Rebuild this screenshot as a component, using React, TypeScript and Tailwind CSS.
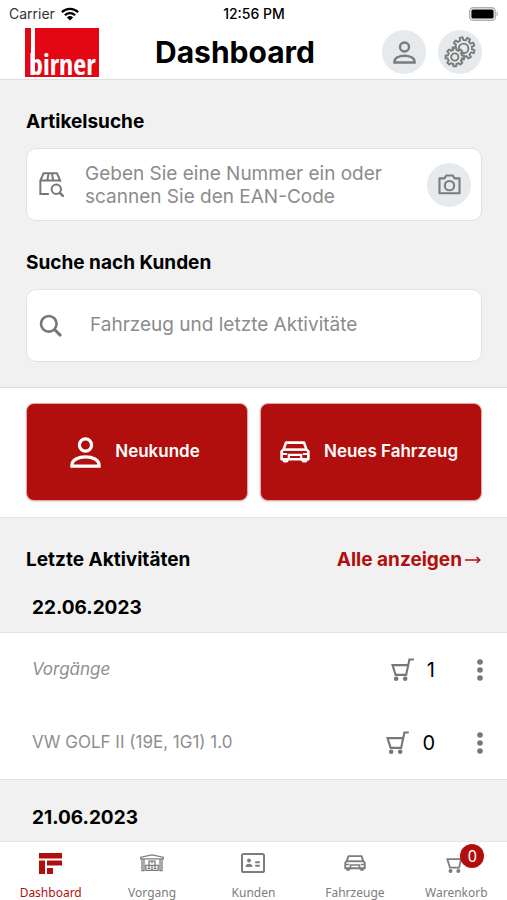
import React from "react";

type IconProps = { className?: string };

function gearPath(cx: number, cy: number, outer: number, inner: number, teeth: number, turn: number) {
  const step = (Math.PI * 2) / teeth;
  const at = (r: number, a: number) =>
    `${(cx + r * Math.cos(a)).toFixed(2)} ${(cy + r * Math.sin(a)).toFixed(2)}`;
  let d = "";
  for (let i = 0; i < teeth; i++) {
    const a = i * step + turn;
    d += `${i === 0 ? "M" : "L"}${at(inner, a - step * 0.28)}`;
    d += `L${at(outer, a - step * 0.2)}L${at(outer, a + step * 0.2)}L${at(inner, a + step * 0.28)}`;
    d += `A${inner} ${inner} 0 0 1 ${at(inner, a + step * 0.72)}`;
  }
  return d + "Z";
}

function PersonIcon({ className }: IconProps) {
  return (
    <svg viewBox="0 0 24 24" className={className} fill="none" stroke="currentColor" strokeWidth="2.5" aria-hidden="true">
      <circle cx="12" cy="6.2" r="4.7" />
      <path d="M1.5 22.5v-.9c0-4 5-6.2 10.5-6.2s10.5 2.2 10.5 6.2v.9z" />
    </svg>
  );
}

function GearsIcon({ className }: IconProps) {
  return (
    <svg viewBox="0 0 32 32" className={className} stroke="currentColor" strokeWidth="1.9" strokeLinejoin="round" fill="none" aria-hidden="true">
      <path d={gearPath(19.6, 12.4, 11.2, 8.4, 9, 0.3)} />
      <circle cx="19.6" cy="12.4" r="4.8" />
      <path d={gearPath(10.8, 21, 9.4, 7.2, 8, 0)} fill="#e7eaec" />
      <circle cx="10.8" cy="21" r="3.6" />
    </svg>
  );
}

function PackageSearchIcon({ className }: IconProps) {
  return (
    <svg viewBox="0 0 24 24" className={className} fill="none" stroke="currentColor" strokeWidth="1.9" aria-hidden="true">
      <path d="M9.5 21.1H1.3V8.2L4.4 1.3h12.8l3.1 6.9v1.2M1.3 8.2h19M9.2 1.3L8 8.2M12.4 1.3l1.2 6.9" />
      <circle cx="16.6" cy="16.6" r="4.5" />
      <path d="M19.8 19.8l4 4" strokeWidth="2.4" />
    </svg>
  );
}

function CameraIcon({ className }: IconProps) {
  return (
    <svg viewBox="0 0 24 22" className={className} fill="none" stroke="currentColor" strokeWidth="2.2" strokeLinejoin="round" aria-hidden="true">
      <path d="M1.5 4.6h5.2L8.6 1.5h6.8l1.9 3.1h5.2v15.6h-21z" />
      <circle cx="12" cy="12.2" r="4.9" />
    </svg>
  );
}

function SearchIcon({ className }: IconProps) {
  return (
    <svg viewBox="0 0 24 24" className={className} fill="none" stroke="currentColor" strokeWidth="2.6" aria-hidden="true">
      <circle cx="9.8" cy="9.8" r="7.8" />
      <path d="M15.4 15.4l6.6 6.6" strokeWidth="3" />
    </svg>
  );
}

function CarIcon({ className }: IconProps) {
  return (
    <svg viewBox="0 0 30 22" className={className} fill="none" stroke="currentColor" strokeWidth="2.6" strokeLinejoin="round" aria-hidden="true">
      <path d="M1.6 10.4L3.6 8.4 6 1.6h18l2.4 6.8 2 2v7.8H1.6z" />
      <path d="M3.6 8.6h22.8" />
      <path d="M2 13h5.2M28 13h-5.2M8.8 18.2v-4.4h12.4v4.4" strokeWidth="2.2" />
      <path d="M3.2 18.4h4.6v1.2a1.2 1.2 0 0 1-1.2 1.2H4.4a1.2 1.2 0 0 1-1.2-1.2zM22.2 18.4h4.6v1.2a1.2 1.2 0 0 1-1.2 1.2h-2.2a1.2 1.2 0 0 1-1.2-1.2z" fill="currentColor" strokeWidth="1.4" />
    </svg>
  );
}

function CartIcon({ className }: IconProps) {
  return (
    <svg viewBox="0 0 24 24" className={className} fill="none" stroke="currentColor" strokeWidth="2.2" aria-hidden="true">
      <path d="M23.8 1.6h-4.6L15.8 17.6H4.8L1.6 7.4h16.2" />
      <circle cx="5.4" cy="21.6" r="2.4" fill="currentColor" stroke="none" />
      <circle cx="14.8" cy="21.6" r="2.4" fill="currentColor" stroke="none" />
    </svg>
  );
}

function DashboardIcon({ className }: IconProps) {
  return (
    <svg viewBox="0 0 23 21" className={className} fill="currentColor" aria-hidden="true">
      <path d="M0 0h23v5.6H0zM0 7.6h6V21H0zM8 7.6h15v5H8zM8 15h6v6H8z" />
    </svg>
  );
}

function GarageIcon({ className }: IconProps) {
  return (
    <svg viewBox="0 0 24 18" className={className} fill="none" stroke="currentColor" strokeWidth="1.3" aria-hidden="true">
      <path d="M.7 4.8V3.2L12 .8l11.3 2.4v1.6zM2 4.8V17M4 4.8V17M20 4.8V17M22 4.8V17M1.4 16.6h3M19.6 16.6h3" />
      <path d="M9 7.2h6v4.2H9zM5.8 11.4h6.2v5H5.8zM12 11.4h6.2v5H12zM12 7.2v2M9 11.4v2M15 11.4v2M7.4 14.4h3M13.6 14.4h3" />
    </svg>
  );
}

function ContactIcon({ className }: IconProps) {
  return (
    <svg viewBox="0 0 24 20" className={className} fill="none" stroke="currentColor" strokeWidth="2" aria-hidden="true">
      <rect x="1" y="1" width="22" height="18" rx="1.6" />
      <circle cx="8" cy="7.6" r="2" fill="currentColor" stroke="none" />
      <path d="M4.6 14c0-2.2 1.6-3.2 3.4-3.2s3.4 1 3.4 3.2z" fill="currentColor" stroke="none" />
      <path d="M14.2 9.2h4.6M14.2 12.8h4.6" />
    </svg>
  );
}

function DotsIcon({ className }: IconProps) {
  return (
    <svg viewBox="0 0 6 22" className={className} fill="currentColor" aria-hidden="true">
      <circle cx="3" cy="3" r="2.8" />
      <circle cx="3" cy="11" r="2.8" />
      <circle cx="3" cy="19" r="2.8" />
    </svg>
  );
}

function WifiIcon({ className }: IconProps) {
  return (
    <svg viewBox="0 0 18 14" className={className} fill="none" stroke="currentColor" strokeWidth="2.3" aria-hidden="true">
      <path d="M.9 5.1a11.6 11.6 0 0 1 16.2 0M3.9 8.2a7.3 7.3 0 0 1 10.2 0" />
      <path d="M9 13.6L5.9 10.4a4.5 4.5 0 0 1 6.2 0z" fill="currentColor" stroke="none" />
    </svg>
  );
}

function BatteryIcon({ className }: IconProps) {
  return (
    <svg viewBox="0 0 30 14" className={className} aria-hidden="true">
      <rect x=".7" y=".7" width="25.6" height="12.6" rx="3.6" fill="none" stroke="#b0b0b0" strokeWidth="1.4" />
      <rect x="2.4" y="2.4" width="22.2" height="9.2" rx="1.6" fill="#000" />
      <path d="M27.6 4.6c1.6.4 1.6 4.4 0 4.8z" fill="#a8a8a8" />
    </svg>
  );
}

function Logo() {
  return (
    <svg viewBox="0 0 74 49" className="h-[49px] w-[74px] overflow-visible" role="img" aria-label="birner">
      <rect width="74" height="49" fill="#e30613" />
      <rect x="6" width="4" height="47" fill="#fff" />
      <text x="4" y="47" fontSize="28" fontWeight="700" fill="#fff" fontFamily="'Liberation Sans Narrow', 'Open Sans Condensed', 'Roboto Condensed', 'Liberation Sans', sans-serif">
        birner
      </text>
    </svg>
  );
}

const activities = [
  { name: "Vorgänge", count: 1, italic: true },
  { name: "VW GOLF II (19E, 1G1) 1.0", count: 0, italic: false },
];

const tabs = [
  { label: "Dashboard", icon: <DashboardIcon className="h-[21px] w-[23px]" />, active: true },
  { label: "Vorgang", icon: <GarageIcon className="h-[18px] w-6" /> },
  { label: "Kunden", icon: <ContactIcon className="h-5 w-6" /> },
  { label: "Fahrzeuge", icon: <CarIcon className="h-4 w-[22px]" /> },
  { label: "Warenkorb", icon: <CartIcon className="h-5 w-5" />, badge: 0 },
];

const roundButton = "flex size-11 shrink-0 items-center justify-center rounded-full bg-[#e7eaec] text-[#7b7b7b]";
const card = "flex h-[73px] items-center rounded-[10px] border border-[#e2e2e2] bg-white text-[#777]";
const heading = "text-[19px] leading-7 font-bold";
const action =
  "flex h-[98px] flex-1 items-center justify-center gap-[14px] rounded-lg border border-[#e3a9a7] bg-[#b10f0d] pr-1 text-[17px] font-semibold text-white shadow-sm";

export default function App() {
  return (
    <div className="flex min-h-screen flex-col bg-[#f1f1f1] font-['Inter','Liberation_Sans',sans-serif] text-black">
      <header className="border-b border-[#dedede] bg-white">
        <div className="grid h-7 grid-cols-3 items-center pr-2 pl-[9px] text-sm">
          <div className="flex items-center gap-[6px] text-[#333]">
            Carrier
            <WifiIcon className="h-[14px] w-[18px] text-black" />
          </div>
          <div className="text-center font-medium">12:56 PM</div>
          <BatteryIcon className="h-[14px] w-[30px] justify-self-end" />
        </div>
        <div className="flex h-[51px] items-start px-[25px]">
          <Logo />
          <h1 className="ml-14 text-[30px] leading-[48px] font-bold">Dashboard</h1>
          <div className="ml-auto flex items-center gap-3 pt-[2px]">
            <button type="button" aria-label="Profil" className={roundButton}>
              <PersonIcon className="h-[23px] w-[23px]" />
            </button>
            <button type="button" aria-label="Einstellungen" className={roundButton}>
              <GearsIcon className="h-8 w-8" />
            </button>
          </div>
        </div>
      </header>

      <main className="flex-1">
        <section className="border-b border-[#dedede] pt-7 pr-[25px] pb-[25px] pl-[26px]">
          <label htmlFor="artikel" className={`block ${heading}`}>
            Artikelsuche
          </label>
          <div className={`${card} mt-3 pr-[10px] pl-3`}>
            <PackageSearchIcon className="h-[25px] w-[25px]" />
            <textarea
              id="artikel"
              rows={2}
              placeholder="Geben Sie eine Nummer ein oder scannen Sie den EAN-Code"
              className="ml-[21px] block min-w-0 flex-1 resize-none overflow-hidden text-[19px] leading-[23px] text-black outline-none placeholder:text-[#8c8c8c]"
            />
            <button type="button" aria-label="EAN-Code scannen" className={roundButton}>
              <CameraIcon className="h-[21px] w-[23px]" />
            </button>
          </div>
          <label htmlFor="kunden" className={`mt-7 block ${heading}`}>
            Suche nach Kunden
          </label>
          <div className={`${card} mt-3 pr-[10px] pl-3`}>
            <SearchIcon className="h-6 w-6" />
            <input
              id="kunden"
              type="text"
              placeholder="Fahrzeug und letzte Aktivitäte"
              className="ml-[27px] min-w-0 flex-1 text-[19px] text-black outline-none placeholder:text-[#8c8c8c]"
            />
          </div>
        </section>

        <section className="flex gap-3 border-b border-[#e4e4e4] bg-white pt-[15px] pr-[25px] pb-4 pl-[26px]">
          <button type="button" className={action}>
            <PersonIcon className="h-[31px] w-[31px]" />
            Neukunde
          </button>
          <button type="button" className={action}>
            <CarIcon className="h-[22px] w-[30px]" />
            Neues Fahrzeug
          </button>
        </section>

        <section>
          <div className={`flex items-center justify-between px-[26px] pt-7 ${heading}`}>
            <h2>Letzte Aktivitäten</h2>
            <a href="#alle" className="flex items-center gap-[3px] text-[#b10f0d]">
              Alle anzeigen
              <svg viewBox="0 0 16 10" className="h-[10px] w-4" fill="none" stroke="currentColor" strokeWidth="1.5" aria-hidden="true">
                <path d="M0 5h14.6M11.6 2L14.8 5l-3.2 3" />
              </svg>
            </a>
          </div>
          <h3 className={`mt-5 px-8 ${heading}`}>22.06.2023</h3>
          <ul className="mt-[10px] border-y border-[#e2e2e2] bg-white">
            {activities.map((a) => (
              <li key={a.name} className="flex h-[73px] items-center pr-6 pl-8">
                <span className={`flex-1 text-[17px] text-[#8e8e8e] ${a.italic ? "italic" : ""}`}>{a.name}</span>
                <CartIcon className="h-[23px] w-[23px] text-[#777]" />
                <span className="ml-[13px] text-xl leading-6">{a.count}</span>
                <button type="button" aria-label="Mehr" className="ml-[42px] text-[#777]">
                  <DotsIcon className="h-[22px] w-[6px]" />
                </button>
              </li>
            ))}
          </ul>
          <h3 className={`px-8 pt-6 pb-[9px] ${heading}`}>21.06.2023</h3>
        </section>
      </main>

      <nav className="sticky bottom-0 grid h-[60px] grid-cols-5 border-t border-[#e8e8e8] bg-white font-['Noto_Sans','Open_Sans',sans-serif] text-xs">
        {tabs.map((t) => (
          <a
            key={t.label}
            href={`#${t.label.toLowerCase()}`}
            aria-current={t.active ? "page" : undefined}
            className={`flex flex-col items-center pt-[11px] ${t.active ? "text-[#b10f0d]" : "text-[#7d7d7d]"}`}
          >
            <span className="relative flex h-5 items-center">
              {t.icon}
              {t.badge !== undefined && (
                <span className="absolute -top-[9px] left-[14px] flex size-6 items-center justify-center rounded-full bg-[#b10f0d] text-base text-white">
                  {t.badge}
                </span>
              )}
            </span>
            <span className="mt-3 leading-4">{t.label}</span>
          </a>
        ))}
      </nav>
    </div>
  );
}
